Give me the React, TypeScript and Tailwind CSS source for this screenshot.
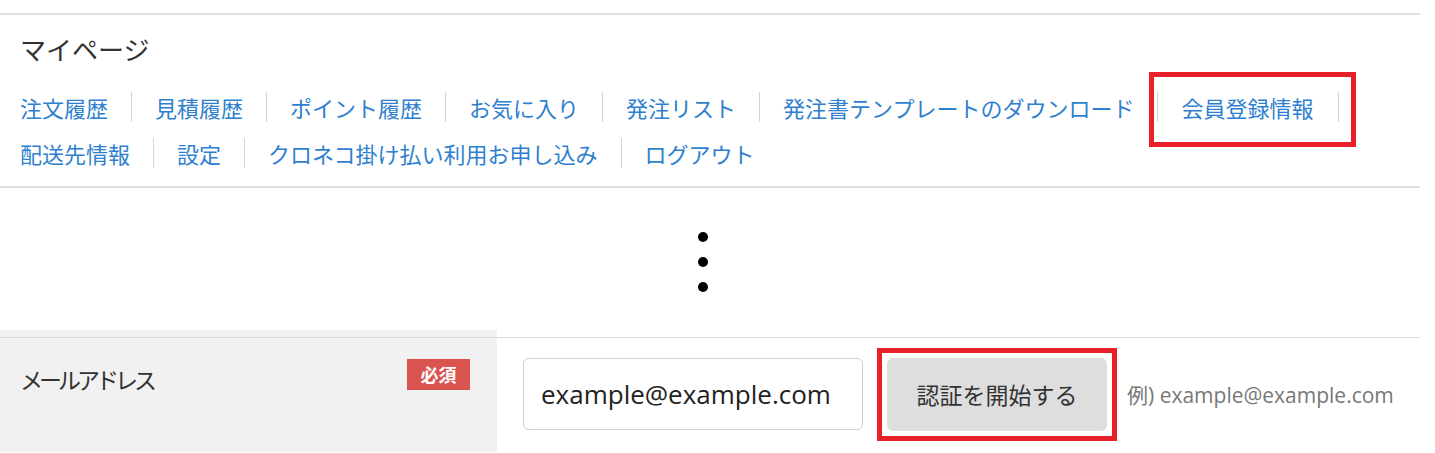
const navRows: string[][] = [
  ["注文履歴", "見積履歴", "ポイント履歴", "お気に入り", "発注リスト", "発注書テンプレートのダウンロード", "会員登録情報"],
  ["配送先情報", "設定", "クロネコ掛け払い利用お申し込み", "ログアウト"],
];

function NavRow({ items, trailing }: { items: string[]; trailing?: boolean }) {
  return (
    <div className="flex items-center h-[46px]">
      {items.map((label, i) => (
        <div key={label} className="flex items-center">
          {i > 0 && <span className="w-px h-[30px] bg-[#d4d4d4] mx-[23px]" />}
          <a href="#" className="text-[22px] leading-none text-[#2e7fcf] whitespace-nowrap">
            {label}
          </a>
        </div>
      ))}
      {trailing && <span className="w-px h-[30px] bg-[#d4d4d4] ml-[25px]" />}
    </div>
  );
}

export default function App() {
  return (
    <div
      className="relative w-[1435px] h-[453px] overflow-hidden bg-white"
      style={{ fontFamily: '"Noto Sans CJK JP", "Noto Sans", sans-serif' }}
    >
      <div className="w-[1420px] pt-[13px]">
        <div className="border-t-2 border-[#dedede] border-b-2 pb-[10px]">
          <h2 className="pl-[20px] pt-[18px] text-[26px] leading-[32px] text-[#333]">マイページ</h2>
          <div className="pl-[20px] pt-[19px]">
            <NavRow items={navRows[0]} trailing />
            <NavRow items={navRows[1]} />
          </div>
        </div>

        {/* vertical ellipsis */}
        <div className="h-[142px] flex justify-center">
          <div className="flex flex-col items-center gap-[15px] pt-[44px] w-[10px] -ml-[14px]">
            <span className="w-[10px] h-[10px] rounded-full bg-black" />
            <span className="w-[10px] h-[10px] rounded-full bg-black" />
            <span className="w-[10px] h-[10px] rounded-full bg-black" />
          </div>
        </div>

        <div className="flex h-[122px]" style={{ fontFamily: '"Open Sans", "Noto Sans CJK JP", sans-serif' }}>
          <div className="w-[497px] bg-[#f1f1f1] pt-[7px]">
            <div className="border-t border-[#dcdcdc] flex justify-between pl-[20px] pr-[27px] pt-[21px]">
              <span
                className="text-[23px] leading-[32px] text-[#333] tracking-[-4px] pt-[4px]"
                style={{ fontFamily: '"Noto Sans CJK JP", sans-serif' }}
              >
                メールアドレス
              </span>
              <span
                className="w-[63px] h-[31px] bg-[#d9534f] text-white text-[18px] font-bold flex items-center justify-center"
                style={{ fontFamily: '"Noto Sans CJK JP", sans-serif' }}
              >
                必須
              </span>
            </div>
          </div>
          <div className="flex-1 pt-[7px]">
            <div className="border-t border-[#dcdcdc] flex items-start pl-[26px] pt-[10px]">
              <input
                readOnly
                value="example@example.com"
                className="mt-[10px] w-[340px] h-[72px] rounded-[6px] border border-[#cfcfcf] pl-[17px] text-[26px] text-[#222] bg-white outline-none"
              />
              <div className="ml-[14px] border-[5px] border-[#e8202a] p-[5px]">
                <button
                  className="w-[220px] h-[73px] rounded-[6px] bg-[#dedede] text-[23px] text-[#333]"
                  style={{ fontFamily: '"Noto Sans CJK JP", sans-serif' }}
                >
                  認証を開始する
                </button>
              </div>
              <span className="ml-[10px] mt-[32px] text-[21px] text-[#777]">例) example@example.com</span>
            </div>
          </div>
        </div>
      </div>

      {/* annotation box around 会員登録情報 */}
      <div className="absolute left-[1149px] top-[72px] w-[207px] h-[75px] border-[5px] border-[#e8202a]" />
    </div>
  );
}
